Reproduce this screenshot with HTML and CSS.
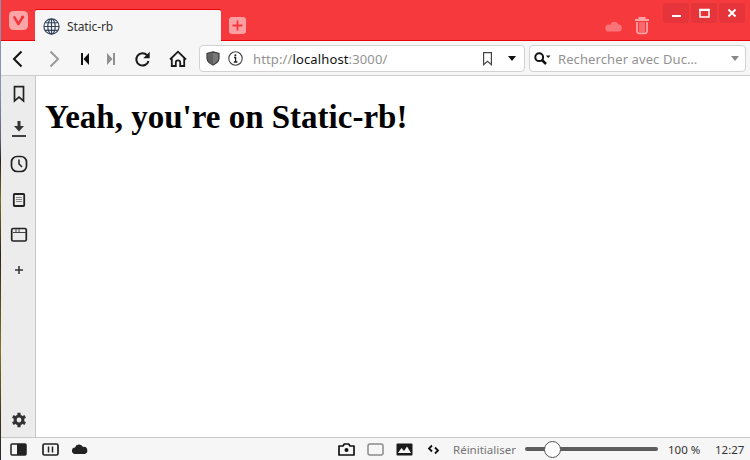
FILE: index.html
```html
<!DOCTYPE html>
<html lang="fr">
<head>
<meta charset="utf-8">
<title>Static-rb</title>
<link rel="stylesheet" href="styles.css">
</head>
<body>
<div class="window">
  <header class="tabbar">
    <div class="menu-button">
      <svg width="19" height="19" viewBox="0 0 19 19"><rect width="19" height="19" rx="4.5" fill="#fba5a7"/><path d="M5.3 6.2 9.4 13l4-6.600" fill="none" stroke="#f5363a" stroke-width="2.5" stroke-linecap="round" stroke-linejoin="round"/><circle cx="13.6" cy="6.2" r="1.6" fill="#f5363a"/></svg>
    </div>
    <div class="tab">
      <svg width="17" height="17" viewBox="0 0 17 17" fill="none" stroke="#34445c" stroke-width="1.15"><circle cx="8.5" cy="8.5" r="7.6"/><ellipse cx="8.5" cy="8.5" rx="3.7" ry="7.5"/><path d="M1 8.5h15M8.5 1v15M2.3 4.700h12.400M2.300 12.300h12.400"/></svg>
      <span>Static-rb</span>
    </div>
    <div class="new-tab">
      <svg width="17" height="17" viewBox="0 0 17 17"><rect width="17" height="17" rx="3" fill="#fba0a2"/><path d="M8.500 3.500v10M3.500 8.500h10" stroke="#f5363a" stroke-width="1.800"/></svg>
    </div>
    <div class="tab-tools">
      <svg width="17" height="12" viewBox="0 0 17 12"><path d="M4 11.500a3.500 3.500 0 0 1-.3-7C4.500 4.300 5 5 5.300 5.200A4.300 4.300 0 0 1 13.500 4.500 3.500 3.500 0 0 1 13.400 11.500z" fill="#f87478"/></svg>
      <svg width="14" height="18" viewBox="0 0 14 18" fill="none" stroke="#fba5a7"><path d="M0 3h14M4.500 2V1h5v1" stroke-width="2"/><path d="M2 5v9q0 2.300 2 2.300h6q2 0 2-2.300V5" stroke-width="1.700"/><path d="M5 5v10M7 5v10M9 5v10" stroke-width=".9"/></svg>
    </div>
    <div class="window-controls">
      <span><svg width="26" height="20"><path d="M9 13h9" stroke="#fff" stroke-width="2"/></svg></span>
      <span><svg width="26" height="20"><path d="M9 6.500h9V14H9z" fill="none" stroke="#fff" stroke-width="1.500"/><path d="M8.500 7h10" stroke="#fff" stroke-width="2"/></svg></span>
      <span><svg width="26" height="20"><path d="m9.500 6.500 7 7m0-7-7 7" stroke="#fff" stroke-width="2"/></svg></span>
    </div>
  </header>

  <nav class="toolbar">
    <div class="nav-buttons">
      <svg width="12" height="18" viewBox="0 0 12 18"><path d="M9.500 1.500 2 9l7.500 7.500" fill="none" stroke="#111" stroke-width="2"/></svg>
      <svg width="12" height="18" viewBox="0 0 12 18"><path d="M2.500 1.500 10 9l-7.500 7.500" fill="none" stroke="#999" stroke-width="2"/></svg>
      <svg width="10" height="12" viewBox="0 0 10 12" fill="#111"><path d="M1 0h2v12H1zM9 0v12L3.500 6z"/></svg>
      <svg width="10" height="12" viewBox="0 0 10 12" fill="#919191"><path d="M7 0h2v12H7zM1 0v12l5.500-6z"/></svg>
      <svg width="17" height="17" viewBox="0 0 17 17"><path d="M13.200 4.300A6.200 6.200 0 1 0 14.500 10" fill="none" stroke="#191919" stroke-width="2"/><path d="M15.700.8v6.400H9.300z" fill="#191919"/></svg>
      <svg width="18" height="18" viewBox="0 0 18 18" fill="none" stroke="#191919" stroke-width="1.800"><path d="m1 9.500 8-7.800 8 7.800M2.800 8.500V16h4v-3.500a2.200 2.200 0 0 1 4.400 0V16h4V8.500"/></svg>
    </div>
    <div class="field address">
      <svg class="shield" width="14" height="15" viewBox="0 0 14 15"><path d="M7 .8 13 2.500v5Q12.500 11.500 7 14 1.500 11.500 1 7.500v-5z" fill="#777" stroke="#393939" stroke-width="1.200"/><path d="M7 2v11Q2 10.500 2 7.500V3.400z" fill="#606060"/></svg>
      <svg class="info" width="15" height="15" viewBox="0 0 15 15"><circle cx="7.500" cy="7.500" r="6.700" fill="none" stroke="#444" stroke-width="1.100"/><path d="M6 6.500h1.600V11M5.800 11h3.600" fill="none" stroke="#222" stroke-width="1.300"/><circle cx="7.400" cy="4.200" r="1" fill="#222"/></svg>
      <span class="url">http://<b>localhost</b>:3000/</span>
      <svg class="bookmark" width="9" height="14" viewBox="0 0 9 14"><path d="M.6.6h7.800v12L4.500 9.300.6 12.600z" fill="none" stroke="#444" stroke-width="1.200"/></svg>
      <svg class="caret" width="8" height="5" viewBox="0 0 8 5"><path d="M0 0h8L4 5z" fill="#111"/></svg>
    </div>
    <div class="field search">
      <svg width="17" height="13" viewBox="0 0 17 13"><circle cx="5.200" cy="5.200" r="3.900" fill="none" stroke="#111" stroke-width="2"/><path d="m8 8 4 4" stroke="#111" stroke-width="2.500"/><path d="M12 3.500h4.500L14.200 6z" fill="#111"/></svg>
      <span>Rechercher avec Duc…</span>
      <svg width="8" height="5" viewBox="0 0 8 5"><path d="M0 0h8L4 5z" fill="#888"/></svg>
    </div>
  </nav>

  <div class="body">
    <aside class="panel">
      <svg width="18" height="18" viewBox="0 0 18 18"><path d="M4.500 1.700h9V16L9 12.200 4.500 16z" fill="none" stroke="#222" stroke-width="1.700"/></svg>
      <svg width="18" height="18" viewBox="0 0 18 18"><path d="M7.500 1h3v5H14l-5 5.500L4 6h3.500z" fill="#333"/><path d="M2 16h14" stroke="#222" stroke-width="1.700"/></svg>
      <svg width="18" height="18" viewBox="0 0 18 18" fill="none" stroke="#222" stroke-width="1.700"><rect x="1.500" y="1.500" width="15" height="15" rx="5.500"/><path d="M9 4.500V9l3 3" stroke-width="1.500"/></svg>
      <svg width="18" height="18" viewBox="0 0 18 18" fill="none"><rect x="3.800" y="3" width="10.400" height="12" rx=".7" stroke="#222" stroke-width="1.800"/><path d="M6 6.500h6M6 8.500h6M6 10.500h6" stroke="#888"/></svg>
      <svg width="18" height="18" viewBox="0 0 18 18" fill="none"><rect x="1.700" y="2.500" width="14.600" height="12.500" rx="1.500" stroke="#222" stroke-width="1.700"/><path d="M3 6.500h13M6 3v3M9 3v3" stroke="#444"/></svg>
      <svg width="18" height="18" viewBox="0 0 18 18"><path d="M9 5v8M5 9h8" stroke="#333" stroke-width="1.500"/></svg>
      <svg class="settings" width="18" height="18" viewBox="0 0 18 18"><circle cx="9" cy="9" r="3.900" fill="none" stroke="#333" stroke-width="3"/><path d="M9 1.800v3M9 13.200v3M2.800 5.400l2.600 1.500M12.600 11.100l2.600 1.500M2.800 12.600l2.600-1.500M12.600 6.900l2.600-1.500" stroke="#333" stroke-width="3.200"/></svg>
    </aside>
    <main class="page"><h1>Yeah, you're on Static-rb!</h1></main>
  </div>

  <footer class="status">
    <div class="status-left">
      <svg width="17" height="13" viewBox="0 0 17 13"><rect x="1" y="1" width="15" height="11" rx="1" fill="none" stroke="#222" stroke-width="1.500"/><path d="M7 1h9v11H7z" fill="#222"/></svg>
      <svg width="17" height="13" viewBox="0 0 17 13" fill="none" stroke="#222"><rect x="1" y="1" width="15" height="11" rx="1.500" stroke-width="1.700"/><path d="M6.500 3.500v6M10.500 3.500v6" stroke-width="1.500"/></svg>
      <svg width="17" height="12" viewBox="0 0 17 12"><path d="M3.500 11a3.300 3.300 0 0 1 .5-6.500A4.300 4.300 0 0 1 12 4a3.500 3.500 0 0 1 1.500 7z" fill="#222"/></svg>
    </div>
    <div class="status-tools">
      <svg width="17" height="13" viewBox="0 0 17 13"><path d="M1 3h4l1.300-2h4.400L12 3h4v9H1z" fill="none" stroke="#111" stroke-width="1.700" stroke-linejoin="round"/><circle cx="8.500" cy="7" r="2" fill="#111"/></svg>
      <svg width="17" height="13" viewBox="0 0 17 13"><rect x="1" y="1" width="15" height="11" rx="2" fill="none" stroke="#8b8b8b" stroke-width="1.500"/></svg>
      <svg width="17" height="13" viewBox="0 0 17 13"><rect x=".5" y=".5" width="16" height="12" rx="1" fill="#1b1b1b"/><path d="m2 10 3.500-5L8 8l3-4.500 4 6.500z" fill="#f6f6f6"/></svg>
      <svg width="13" height="11" viewBox="0 0 13 11" fill="none" stroke="#111" stroke-width="1.800"><path d="M5 1.500 2 4.500l3 3M8 3.500l3 3-3 3"/></svg>
    </div>
    <span class="reset">Réinitialiser</span>
    <div class="slider"><i></i></div>
    <span class="zoom">100 %</span>
    <span class="clock">12:27</span>
  </footer>
</div>
</body>
</html>
```
FILE: styles.css
```css
* { box-sizing: border-box; }
body {
  margin: 0;
  height: 460px;
  overflow: hidden;
  padding-left: 1px;
  background: linear-gradient(#8295b1 0 90px, #66617a 140px, #292019 160px, #79702a 200px, #2c2416 255px, #867525 350px, #3c3319 420px, #2b2634);
  font-family: "Noto Sans", sans-serif;
  font-size: 12px;
  color: #333;
}
svg { display: block; flex: none; }
.window {
  height: 460px;
  display: grid;
  grid-template-rows: 41px 35px 361px 23px;
  background: #f6f6f6;
}
.tabbar {
  display: flex;
  background: #f5393d;
  border-bottom: 1px solid #eb0307;
}
.menu-button { width: 34px; padding: 11px 0 0 8px; }
.tab {
  width: 186px;
  height: 31px;
  margin-top: 10px;
  padding: 1px 0 0 8px;
  display: flex;
  align-items: center;
  gap: 7px;
  background: #f6f6f6;
  border-radius: 2px 2px 0 0;
  box-shadow: 0 -1px #eb0307;
}
.tab span { letter-spacing: -0.1px; }
.new-tab { padding: 17px 0 0 8px; }
.tab-tools { margin-left: auto; display: flex; gap: 13px; padding: 17px 14px 0 0; }
.tab-tools svg:first-child { margin-top: 3px; }
.window-controls { display: flex; gap: 2px; padding: 3px 5px 0 0; }
.window-controls span { height: 20px; background: #e5353a; border-radius: 3px; }
.toolbar {
  display: flex;
  align-items: center;
  padding: 1px 4px 0 0;
  border-bottom: 1px solid #ccc;
}
.nav-buttons {
  width: 198px;
  padding-top: 1px;
  display: grid;
  grid-template-columns: 34px 38px 24px 28px 34px 38px;
  align-items: center;
  justify-items: center;
}
.field {
  height: 27px;
  display: flex;
  align-items: center;
  background: #fff;
  border: 1px solid #d2d2d2;
  border-radius: 4px;
  font-size: 13px;
  color: #929292;
  white-space: nowrap;
}
.address { width: 326px; padding: 0 8px 0 6px; }
.info { margin-left: 8px; }
.url { margin-left: 10px; letter-spacing: 0.13px; }
.url b { font-weight: 400; color: #111; }
.bookmark { margin-left: auto; }
.caret { margin-left: 16px; }
.search { width: 217px; margin-left: 4px; padding: 0 6px 0 4px; }
.search span { margin: 0 auto 0 7px; letter-spacing: 0.1px; }
.body { display: grid; grid-template-columns: 35px 1fr; min-height: 0; }
.panel {
  background: #ececec;
  border-right: 1px solid #c8c8c8;
  display: flex;
  flex-direction: column;
  align-items: center;
  gap: 17.2px;
  padding: 9px 0 8px 1px;
}
.settings { margin-top: auto; }
.page { background: #fff; padding: 23px 9px; }
h1 {
  margin: 0;
  font: bold 33px/37px "Liberation Serif", serif;
  color: #000;
  white-space: nowrap;
}
.status {
  display: flex;
  align-items: center;
  border-top: 1px solid #c8c8c8;
  white-space: nowrap;
}
.status-left { display: flex; align-items: center; padding-left: 9px; }
.status-left svg:nth-child(2) { margin: 0 12px 0 15px; }
.status-tools { display: flex; align-items: center; gap: 12px; margin-left: auto; }
.status-tools svg:last-child { margin-left: 2px; }
.status > span { font-size: 11.5px; }
.reset { width: 64px; margin-left: 13px; color: #737373; }
.slider {
  width: 133px;
  height: 4px;
  margin-left: 8px;
  border-radius: 2px;
  background: #5c5c5c;
  display: flex;
  align-items: center;
}
.slider i {
  width: 17px;
  height: 17px;
  margin-left: 19px;
  flex: none;
  border: 1px solid #555;
  border-radius: 50%;
  background: #fff;
}
.zoom { width: 33px; margin-left: 10px; }
.clock { width: 29px; margin: 0 6px 0 14px; }
```
